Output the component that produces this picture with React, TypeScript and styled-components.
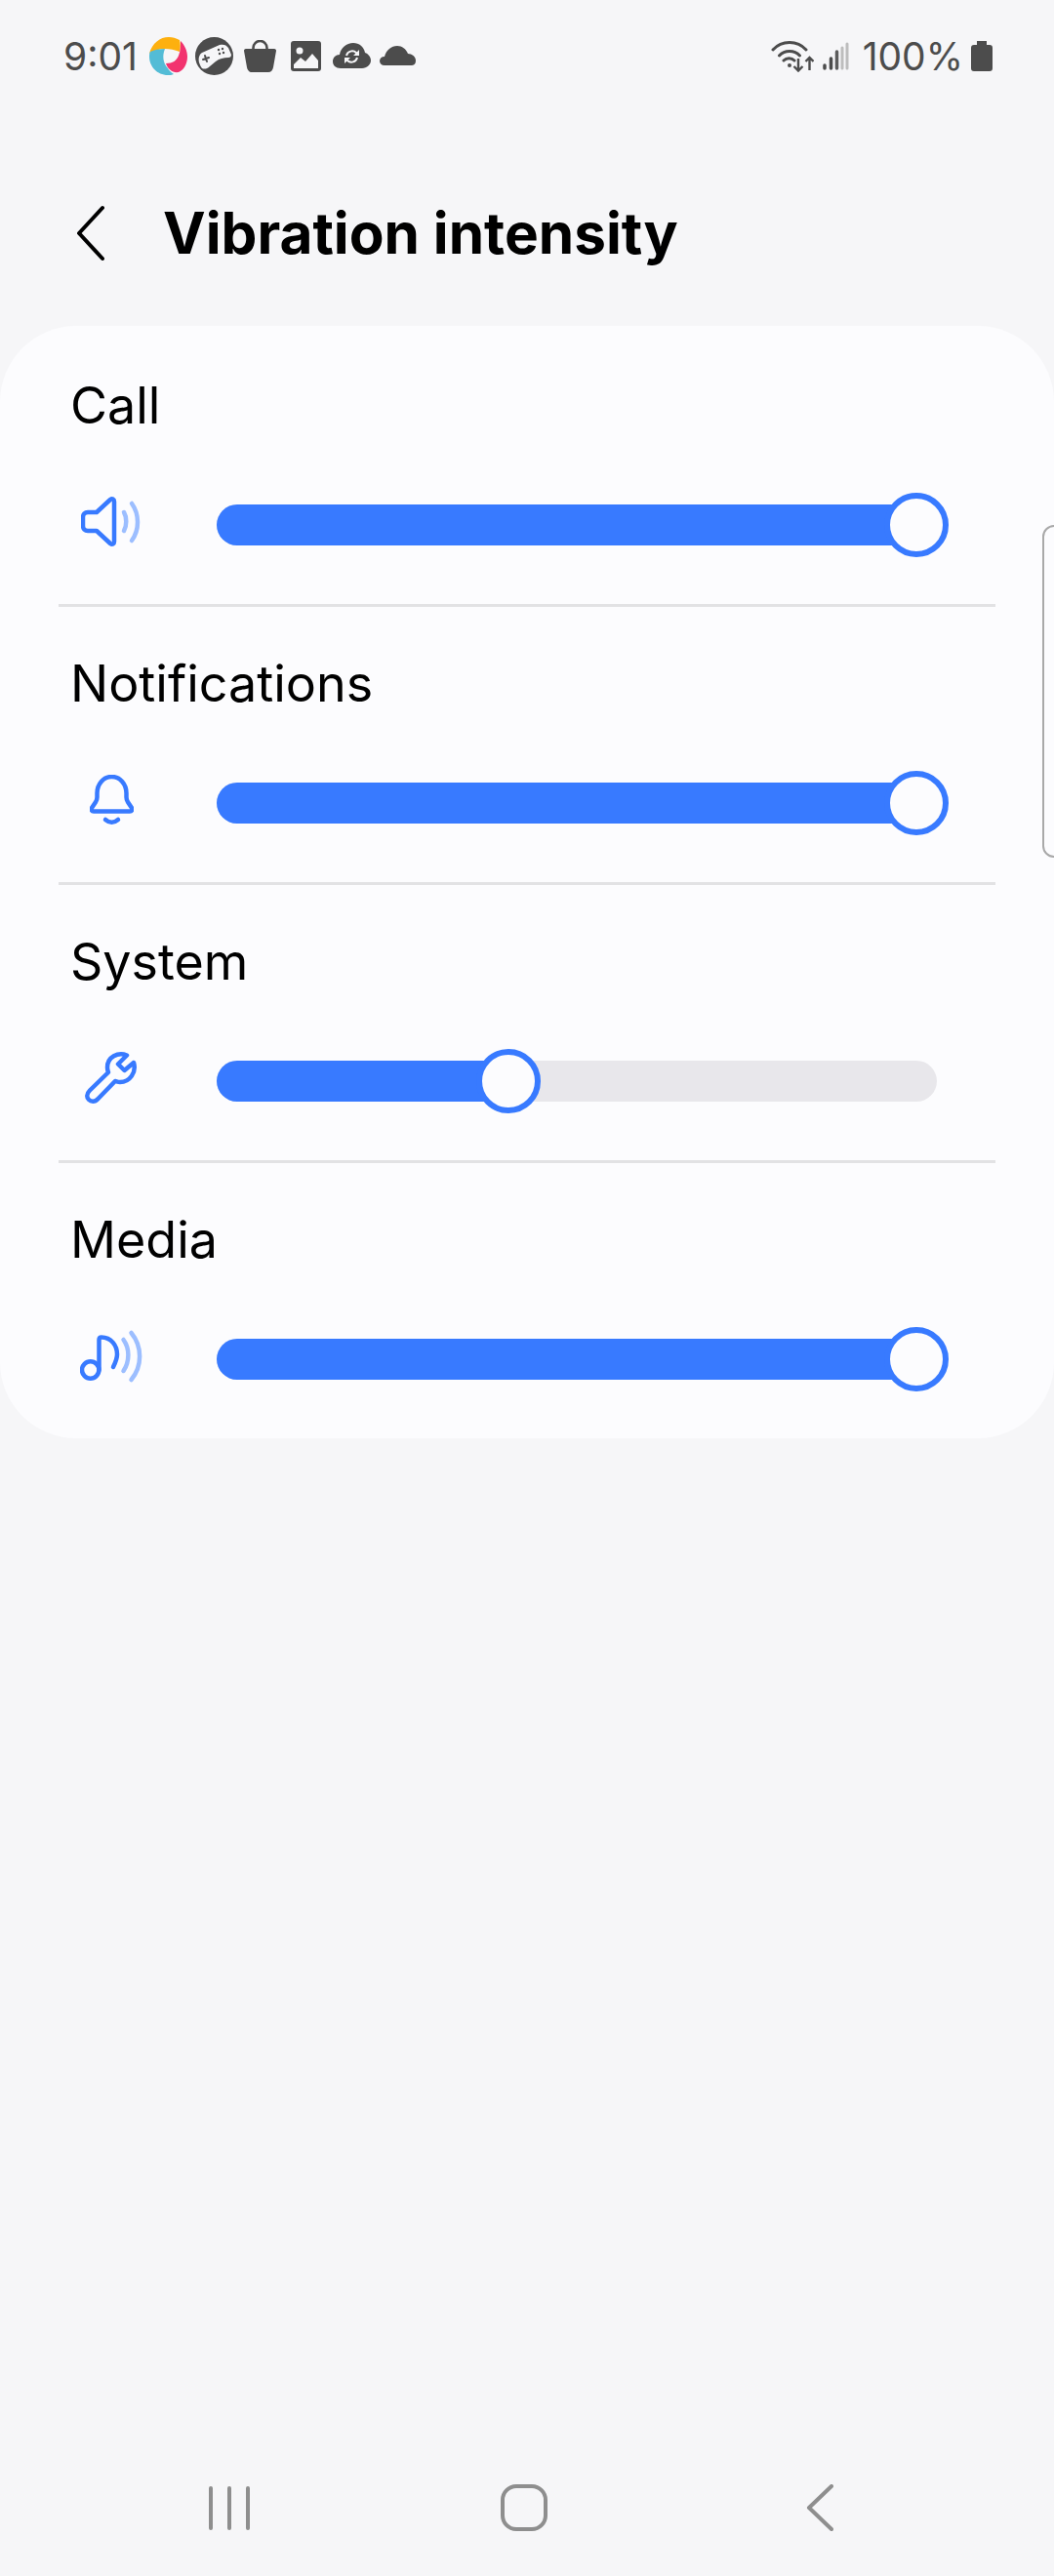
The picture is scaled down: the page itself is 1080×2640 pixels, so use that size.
import React from "react";
import styled, { createGlobalStyle } from "styled-components";

const GlobalStyle = createGlobalStyle`
  html, body {
    margin: 0;
    padding: 0;
    background: #f6f6f8;
  }
  * {
    box-sizing: border-box;
  }
`;

const BLUE = "#387aff";
const SOFT_BLUE = "#9cbeff";
const DARK = "#4c4c4c";
const BG = "#f6f6f8";

const LogoIcon = () => (
  <svg width="39" height="39" viewBox="0 0 39 39">
    <path d="M0 17C3 6 11 0 20 0c4 0 7 1 11 3 1 4 1 8 0 12-5-2-10-3-15-3C10 12 5 14 0 17z" fill="#fdb00f" />
    <path d="M1 15C5 13 10 12 16 12c-3 7-2 15 3 20 1 2 3 4 6 6-2 1-4 1-6 1C8 39 0 30 0 20c0-2 0-3 1-5z" fill="#53bcd6" />
    <path d="M32 4c4 4 7 10 7 16 0 8-4 14-9 16-6 1-11-3-13-9 7 0 11-3 13-8 2-5 2-10 2-15z" fill="#f2336f" />
  </svg>
);

const GamepadIcon = () => (
  <svg width="39" height="39" viewBox="0 0 39 39">
    <circle cx="19.5" cy="19.5" r="19.5" fill={DARK} />
    <path d="M4 26c-1-4 0-8 3-10l18-8c4-1 7 0 9 3l3 7c0 2-1 3-3 3-5 0-9 1-13 4l-6 5c-3 3-6 3-8 2-1-1-2-3-3-6z" fill={BG} />
    <path d="M8 23l6-2M10 19l2 6" stroke={DARK} strokeWidth="2" strokeLinecap="round" />
    <circle cx="24" cy="13" r="1.2" fill={DARK} />
    <circle cx="28" cy="12" r="1.2" fill={DARK} />
    <circle cx="25" cy="17" r="1.2" fill={DARK} />
    <circle cx="29" cy="16" r="1.2" fill={DARK} />
  </svg>
);

const BagIcon = () => (
  <svg width="33" height="33" viewBox="0 0 33 33">
    <path d="M9.500 10V8a7 7 0 0 1 14 0v2" fill="none" stroke={DARK} strokeWidth="2.6" />
    <path d="M2 9h29c1.500 0 2 1 2 2l-3 17c-.5 3-2.500 5-5 5H8c-2.500 0-4.500-2-5-5L0 11c0-1 .5-2 2-2z" fill={DARK} />
  </svg>
);

const PictureIcon = () => (
  <svg width="31" height="31" viewBox="0 0 31 31">
    <rect width="31" height="31" rx="3" fill={DARK} />
    <circle cx="9" cy="10" r="3.500" fill={BG} />
    <path d="M3 28v-4l7-7 5 4 7-8 6 7v8z" fill={BG} />
  </svg>
);

const SyncCloudIcon = () => (
  <svg width="39" height="26" viewBox="0 0 39 26">
    <path d="M8 26C3 26 0 23 0 19c0-4 3-7 7-7C8 5 14 0 21 0c6 0 11 4 12 10 3 1 6 4 6 8 0 4-4 8-9 8z" fill={DARK} />
    <path d="M14 13a6 6 0 0 1 10-3l2 2M25 15a6 6 0 0 1-10 3l-2-2" fill="none" stroke={BG} strokeWidth="2" />
    <path d="M27 7v6h-6zM12 21v-6h6z" fill={BG} />
  </svg>
);

const CloudIcon = () => (
  <svg width="37" height="20" viewBox="0 0 37 20">
    <path d="M5 20c-3 0-5-2-5-4.500C0 13 2 11 5 11 7 4 12 0 18 0c5 0 9 3 11 8 4 0 8 3 8 7s-2 5-5 5z" fill={DARK} />
  </svg>
);

const WifiIcon = () => (
  <svg width="44" height="33" viewBox="0 0 44 33" fill="none">
    <path d="M2 10C11 0 27 0 36 10M8.500 16C14 10 24 10 29.500 16M13 21c3-3 8-3 11 0" stroke={DARK} strokeWidth="3" strokeLinecap="round" />
    <circle cx="19" cy="26" r="2" fill={DARK} />
    <path d="M28 19v12M23.500 27l4.500 4.500 4.500-4.500M39.500 31V18M35.500 22l4-4 4 4" stroke={DARK} strokeWidth="2.4" />
  </svg>
);

const SignalIcon = () => (
  <svg width="27" height="29" viewBox="0 0 27 29">
    <path d="M2 24v3M8.500 17v10" stroke={DARK} strokeWidth="3.500" strokeLinecap="round" />
    <path d="M14.500 10v17" stroke="#5c5c5c" strokeWidth="3.500" strokeLinecap="round" />
    <path d="M20 6v21M25 2v25" stroke="#bdbdbd" strokeWidth="3" strokeLinecap="round" />
  </svg>
);

const BatteryIcon = () => (
  <svg width="22" height="31" viewBox="0 0 22 31">
    <path d="M6 0h10v4h3c2 0 3 1 3 3v21c0 2-1 3-3 3H3c-2 0-3-1-3-3V7c0-2 1-3 3-3h3z" fill={DARK} />
  </svg>
);

const SpeakerIcon = () => (
  <svg width="62" height="60" viewBox="0 0 62 60" fill="none" strokeLinecap="round" strokeLinejoin="round" strokeWidth="4.500">
    <path d="M7 17h9L30 4c2-1.500 4-.5 4 2v41c0 2.500-2 3.500-4 2L16 36H7c-3 0-5-2-5-5v-9c0-3 2-5 5-5z" stroke={BLUE} />
    <path d="M44 17c3 5 3 14 0 19M52 8c8 11 8 27 0 38" stroke={SOFT_BLUE} />
  </svg>
);

const BellIcon = () => (
  <svg width="45" height="58" viewBox="0 0 45 58" fill="none" strokeLinecap="round" strokeLinejoin="round" strokeWidth="4.500">
    <path d="M7.500 19C7.500 9.500 14 2 22.500 2S37.500 9.500 37.500 19v4c0 2 .5 3.500 1.500 5l4 6c1 2 0 3.500-2 3.500H4c-2 0-3-1.500-2-3.500l4-6c1-1.500 1.500-3 1.500-5z" stroke={BLUE} />
    <path d="M16 46c4 3.500 9 3.500 13 0" stroke={BLUE} />
  </svg>
);

const WrenchIcon = () => (
  <svg width="54" height="60" viewBox="0 0 54 60" fill="none" strokeLinecap="round" strokeLinejoin="round" strokeWidth="4.500">
    <path d="M43 3.500C34 0 23 5 23 16c0 2 .5 3.500 1 5L5 39.500c-4 4-3 7.500-1 9.500s6 3 9.500-1L31 30c2 .5 3 1 5 1C46 31 53 21 50 11l-9.500 8L34 12.500z" stroke={BLUE} />
  </svg>
);

const MusicIcon = () => (
  <svg width="64" height="62" viewBox="0 0 64 62" fill="none" strokeLinecap="round" strokeLinejoin="round" strokeWidth="4.500">
    <circle cx="10.700" cy="42" r="8.700" stroke={BLUE} />
    <path d="M19.500 42V11c0-1.500 1-2.500 2.500-2.500C32 8.500 38 17 38 26c0 5-2 9-4 13" stroke={BLUE} />
    <path d="M44.500 11c6.500 9 6.500 22 0 32M52.500 4c11.500 14 11.500 34 0 48" stroke={SOFT_BLUE} />
  </svg>
);

const ChevronIcon = () => (
  <svg width="30" height="58" viewBox="0 0 30 58" fill="none">
    <path d="M27 3L3 29l24 26" stroke="#000" strokeWidth="4" strokeLinecap="round" strokeLinejoin="round" />
  </svg>
);

const HomeIcon = () => (
  <svg width="48" height="48" viewBox="0 0 48 48" fill="none">
    <rect x="2" y="2" width="44" height="44" rx="14" stroke="#8e8e8e" strokeWidth="4" />
  </svg>
);

const NavBackIcon = () => (
  <svg width="28" height="48" viewBox="0 0 28 48" fill="none">
    <path d="M26 2L3 24l23 22" stroke="#8e8e8e" strokeWidth="4" strokeLinecap="round" strokeLinejoin="round" />
  </svg>
);

const Page = styled.div`
  position: relative;
  width: 1080px;
  height: 2640px;
  overflow: hidden;
  display: flex;
  flex-direction: column;
  background: ${BG};
  font-family: Inter, "Noto Sans", sans-serif;
  color: #000;
`;

const StatusBar = styled.div`
  display: flex;
  justify-content: space-between;
  align-items: center;
  height: 114px;
  padding: 0 63px 0 65px;
  color: ${DARK};
  font-size: 39px;
`;

const StatusGroup = styled.div`
  display: flex;
  align-items: center;
`;

const StatusSlot = styled.span<{ $left: number }>`
  display: flex;
  margin-left: ${(p) => p.$left}px;
`;

const Header = styled.div`
  display: flex;
  align-items: center;
  height: 128px;
  margin: 61px 0 31px;
  padding-left: 78px;
`;

const Title = styled.h1`
  margin: 0 0 0 59px;
  font-size: 58.5px;
  font-weight: 700;
  line-height: 1;
`;

const Card = styled.div`
  width: 1080px;
  height: 1140px;
  padding-top: 3px;
  border-radius: 78px;
  background: #fcfcfe;
  display: flex;
  flex-direction: column;
`;

const Row = styled.div`
  height: 282px;
  padding: 41px 72px 0 72px;
`;

const Label = styled.div`
  height: 76px;
  font-size: 52px;
  line-height: 76px;
`;

const Control = styled.div`
  display: flex;
  align-items: center;
  height: 90px;
  margin-top: 39px;
`;

const IconSlot = styled.div`
  display: flex;
  justify-content: center;
  align-items: center;
  width: 78px;
  margin-left: 3px;
`;

const Track = styled.div`
  position: relative;
  width: 738px;
  height: 42px;
  margin-left: 69px;
  border-radius: 21px;
  background: #e8e7eb;
`;

const Fill = styled.div`
  height: 100%;
  border-radius: 21px 0 0 21px;
  background: ${BLUE};
`;

const Thumb = styled.div`
  position: absolute;
  top: 50%;
  width: 66px;
  height: 66px;
  border: 6px solid ${BLUE};
  border-radius: 50%;
  background: #fcfcfe;
  transform: translate(-50%, -50%);
`;

const Divider = styled.div`
  height: 3px;
  margin: 0 60px;
  background: #e2e2e4;
`;

const SideHandle = styled.div`
  position: absolute;
  top: 538px;
  right: -20px;
  width: 32px;
  height: 341px;
  border: 2px solid #a9a9a9;
  border-radius: 12px;
`;

const NavBar = styled.div`
  display: flex;
  align-items: center;
  height: 48px;
  margin-top: 1072px;
  padding-left: 214px;
`;

const Recents = styled.div`
  display: flex;
  gap: 15px;
  width: 299px;
`;

const RecentsBar = styled.span`
  width: 4px;
  height: 45px;
  border-radius: 2px;
  background: #8e8e8e;
`;

const BackSlot = styled.div`
  display: flex;
  margin-left: 265px;
`;

const rows = [
  { label: "Call", icon: <SpeakerIcon />, value: 717 },
  { label: "Notifications", icon: <BellIcon />, value: 717 },
  { label: "System", icon: <WrenchIcon />, value: 299 },
  { label: "Media", icon: <MusicIcon />, value: 717 },
];

const App = () => {
  return (
    <Page>
      <GlobalStyle />
      <StatusBar>
        <StatusGroup>
          <span>9:01</span>
          <StatusSlot $left={12}><LogoIcon /></StatusSlot>
          <StatusSlot $left={8}><GamepadIcon /></StatusSlot>
          <StatusSlot $left={11}><BagIcon /></StatusSlot>
          <StatusSlot $left={15}><PictureIcon /></StatusSlot>
          <StatusSlot $left={12}><SyncCloudIcon /></StatusSlot>
          <StatusSlot $left={9}><CloudIcon /></StatusSlot>
        </StatusGroup>
        <StatusGroup>
          <WifiIcon />
          <StatusSlot $left={9}><SignalIcon /></StatusSlot>
          <StatusSlot $left={14}>100%</StatusSlot>
          <StatusSlot $left={8}><BatteryIcon /></StatusSlot>
        </StatusGroup>
      </StatusBar>
      <Header>
        <ChevronIcon />
        <Title>Vibration intensity</Title>
      </Header>
      <Card>
        {rows.map((row, i) => (
          <React.Fragment key={row.label}>
            <Row>
              <Label>{row.label}</Label>
              <Control>
                <IconSlot>{row.icon}</IconSlot>
                <Track>
                  <Fill style={{ width: row.value }} />
                  <Thumb style={{ left: row.value }} />
                </Track>
              </Control>
            </Row>
            {i < rows.length - 1 && <Divider />}
          </React.Fragment>
        ))}
      </Card>
      <SideHandle />
      <NavBar>
        <Recents>
          <RecentsBar />
          <RecentsBar />
          <RecentsBar />
        </Recents>
        <HomeIcon />
        <BackSlot>
          <NavBackIcon />
        </BackSlot>
      </NavBar>
    </Page>
  );
};

export default App;
